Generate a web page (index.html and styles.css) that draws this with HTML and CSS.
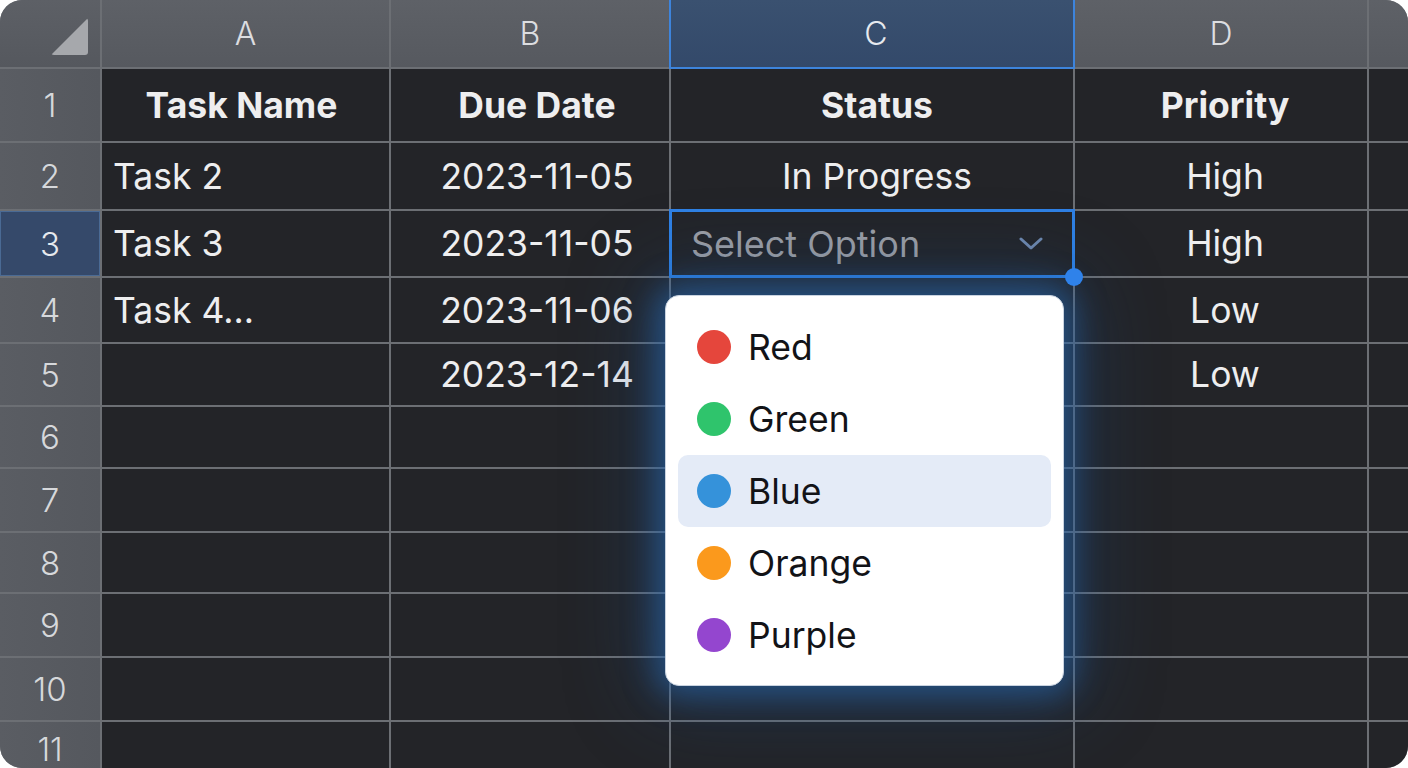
FILE: index.html
```html
<!DOCTYPE html>
<html lang="en">
<head>
<meta charset="utf-8">
<title>Spreadsheet dropdown</title>
<link rel="stylesheet" href="styles.css">
</head>
<body>
<div class="sheet">
  <div class="grid">
    <div class="corner"><span class="tri"></span></div>
    <div class="colhead">A</div>
    <div class="colhead">B</div>
    <div class="colhead active-col">C</div>
    <div class="colhead">D</div>
    <div class="colhead"></div>

    <div class="rowhead">1</div>
    <div class="cell bold ca">Task Name</div>
    <div class="cell bold cb">Due Date</div>
    <div class="cell bold cc">Status</div>
    <div class="cell bold cd">Priority</div>
    <div class="cell"></div>

    <div class="rowhead">2</div>
    <div class="cell left">Task 2</div>
    <div class="cell cb">2023-11-05</div>
    <div class="cell cc">In Progress</div>
    <div class="cell cd">High</div>
    <div class="cell"></div>

    <div class="rowhead active-row">3</div>
    <div class="cell left">Task 3</div>
    <div class="cell cb">2023-11-05</div>
    <div class="cell selected">
      <span class="placeholder">Select Option</span>
      <svg class="chev" width="24" height="14" viewBox="0 0 24 14"><path d="M2 2 L12 11 L22 2" fill="none" stroke="#6f88ae" stroke-width="3" stroke-linecap="round" stroke-linejoin="round"/></svg>
      <span class="handle"></span>
    </div>
    <div class="cell cd">High</div>
    <div class="cell"></div>

    <div class="rowhead">4</div>
    <div class="cell left">Task 4...</div>
    <div class="cell cb">2023-11-06</div>
    <div class="cell"></div>
    <div class="cell cd">Low</div>
    <div class="cell"></div>

    <div class="rowhead">5</div>
    <div class="cell"></div>
    <div class="cell cb">2023-12-14</div>
    <div class="cell"></div>
    <div class="cell cd">Low</div>
    <div class="cell"></div>

    <div class="rowhead">6</div><div class="cell"></div><div class="cell"></div><div class="cell"></div><div class="cell"></div><div class="cell"></div>
    <div class="rowhead">7</div><div class="cell"></div><div class="cell"></div><div class="cell"></div><div class="cell"></div><div class="cell"></div>
    <div class="rowhead">8</div><div class="cell"></div><div class="cell"></div><div class="cell"></div><div class="cell"></div><div class="cell"></div>
    <div class="rowhead">9</div><div class="cell"></div><div class="cell"></div><div class="cell"></div><div class="cell"></div><div class="cell"></div>
    <div class="rowhead">10</div><div class="cell"></div><div class="cell"></div><div class="cell"></div><div class="cell"></div><div class="cell"></div>
    <div class="rowhead last">11</div><div class="cell"></div><div class="cell"></div><div class="cell"></div><div class="cell"></div><div class="cell"></div>
  </div>

  <div class="menu">
    <div class="item"><span class="dot red"></span>Red</div>
    <div class="item"><span class="dot green"></span>Green</div>
    <div class="item hover"><span class="dot blue"></span>Blue</div>
    <div class="item"><span class="dot orange"></span>Orange</div>
    <div class="item"><span class="dot purple"></span>Purple</div>
  </div>
</div>
</body>
</html>
```

FILE: styles.css
```css
html, body {
  margin: 0;
  padding: 0;
  background: #ffffff;
}

body {
  width: 1408px;
  height: 768px;
  overflow: hidden;
  font-family: Inter, "Noto Sans", sans-serif;
}

.sheet {
  position: relative;
  width: 1408px;
  height: 768px;
  border-radius: 22px;
  overflow: hidden;
  background: #6a6d72;
}

.grid {
  display: grid;
  grid-template-columns: 100px 287px 278px 402px 292px 39px;
  grid-template-rows: 67px 72px 66px 65px 64px 61px 60px 62px 59px 62px 62px 46px;
  gap: 2px;
  background: #6c6f74;
  width: 1408px;
  height: 768px;
}

.corner {
  background: linear-gradient(180deg, #5d6066, #55585e);
  position: relative;
}

.tri {
  position: absolute;
  left: 51px;
  top: 18px;
  width: 37px;
  height: 37px;
  background: #a6a8ac;
  clip-path: polygon(100% 0, 100% 100%, 0 100%);
  border-radius: 3px;
}

.colhead {
  background: linear-gradient(180deg, #5e6167, #56595f);
  color: #dcdde0;
  font-size: 32px;
  font-weight: 300;
  display: flex;
  align-items: center;
  justify-content: center;
}

.colhead.active-col {
  background: linear-gradient(180deg, #3a5170, #33496a);
  position: relative;
  color: #e6e9ee;
  padding-left: 8px;
}

.colhead.active-col::after {
  content: "";
  position: absolute;
  left: -2px;
  right: -2px;
  top: 0;
  bottom: -2px;
  border: 2px solid #3d84dc;
  border-top: none;
}

.rowhead {
  background: linear-gradient(90deg, #5a5d63, #55585e);
  color: #d6d8db;
  font-size: 33px;
  font-weight: 300;
  display: flex;
  align-items: center;
  justify-content: center;
}

.rowhead.last {
  align-items: flex-start;
  padding-top: 8px;
  font-size: 32px;
}

.rowhead.active-row {
  background: #35496a;
  box-shadow: inset 0 0 0 1px #4a6a94;
  color: #e6e9ee;
}

.cell {
  background: #232428;
  color: #eeeeef;
  font-size: 35.5px;
  display: flex;
  align-items: center;
  white-space: nowrap;
}

.cell.bold {
  font-weight: 700;
}

.cell.left {
  padding-left: 11px;
}

.cell.ca {
  justify-content: center;
  padding-right: 8px;
}

.cell.cb {
  justify-content: center;
  padding-left: 14px;
}

.cell.cc {
  justify-content: center;
  padding-left: 10px;
}

.cell.cd {
  justify-content: center;
  padding-left: 8px;
}

.cell.selected {
  position: relative;
  padding-left: 20px;
  padding-right: 30px;
  justify-content: space-between;
}

.cell.selected::after {
  content: "";
  position: absolute;
  left: -2px;
  right: -2px;
  top: -2px;
  bottom: -2px;
  border: 3px solid #2f81e4;
}

.placeholder {
  color: #9c9ea4;
  font-size: 36px;
}

.chev {
  display: block;
}

.handle {
  position: absolute;
  right: -10px;
  bottom: -10px;
  width: 18px;
  height: 18px;
  border-radius: 50%;
  background: #2f82ea;
  z-index: 3;
}

.menu {
  position: absolute;
  left: 665px;
  top: 295px;
  width: 399px;
  height: 391px;
  box-sizing: border-box;
  padding: 15px 12px;
  background: #ffffff;
  border: 1.5px solid #c9d3e0;
  border-radius: 14px;
  box-shadow: 0 0 30px 10px rgba(42, 108, 180, 0.55), 0 0 80px 20px rgba(30, 80, 140, 0.35);
  display: flex;
  flex-direction: column;
  z-index: 2;
}

.item {
  height: 72px;
  flex: 0 0 72px;
  display: flex;
  align-items: center;
  gap: 17px;
  padding-left: 19px;
  font-size: 35.5px;
  color: #121317;
  border-radius: 10px;
}

.item.hover {
  background: #e4ebf7;
}

.dot {
  width: 34px;
  height: 34px;
  border-radius: 50%;
  flex: 0 0 34px;
}

.dot.red { background: #e5463c; }
.dot.green { background: #2fc46c; }
.dot.blue { background: #3592da; }
.dot.orange { background: #fb991c; }
.dot.purple { background: #9446cf; }
```
